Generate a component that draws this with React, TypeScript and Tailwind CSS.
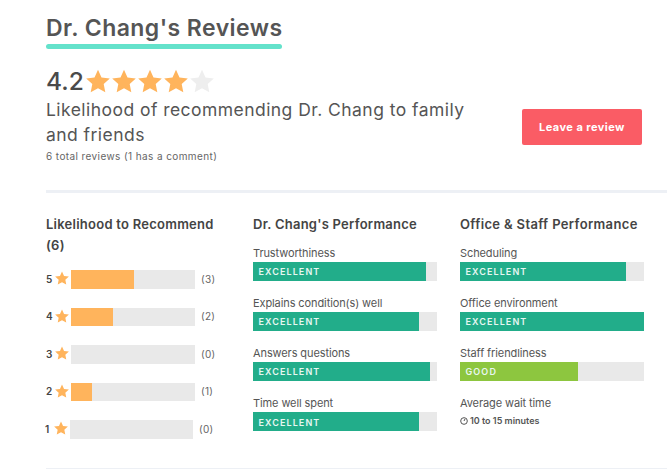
const font = { fontFamily: "Inter, Lato, sans-serif" };

function Star({ className }: { className: string }) {
  return (
    <svg viewBox="0 0 24 24" className={className} fill="currentColor" aria-hidden="true">
      <path d="M12 .8l3.500 7.600 8.300 1-6.100 5.700 1.600 8.200L12 19.200l-7.300 4.100 1.600-8.200L.2 9.400l8.300-1z" />
    </svg>
  );
}

const recommend = [
  { n: 5, pct: 50.5, c: "(3)" },
  { n: 4, pct: 33.5, c: "(2)" },
  { n: 3, pct: 0, c: "(0)" },
  { n: 2, pct: 17, c: "(1)" },
  { n: 1, pct: 0, c: "(0)" },
];

function Meter({ label, pct, grade = "EXCELLENT", good = false }: { label: string; pct: number; grade?: string; good?: boolean }) {
  return (
    <div className="h-[50.3px]">
      <div className="text-[11px] leading-[18px] h-[18px] text-[#555] tracking-[-0.1px] whitespace-nowrap">{label}</div>
      <div className="h-[19px] bg-[#e9e9e9]">
        <div
          className={`h-full flex items-center pl-[5.5px] pt-[1px] text-[9px] font-semibold tracking-[1.1px] text-[#e8f7f2] ${good ? "bg-[#8dc63f]" : "bg-[#22ad8a]"}`}
          style={{ width: `${pct}%` }}
        >
          {grade}
        </div>
      </div>
    </div>
  );
}

export default function App() {
  return (
    <div className="w-[672px] h-[469px] overflow-hidden bg-white pl-[46px] pt-[14px] text-[#4a4a4a]" style={font}>
      <div className="flex justify-start">
        <div className="w-[236px]">
          <h1 className="text-[23px] leading-[28px] font-semibold text-[#555] tracking-[0.45px] whitespace-nowrap">Dr. Chang's Reviews</h1>
          <div className="mt-[2px] h-[4.5px] rounded-full bg-[#64e2cb]" />
        </div>
      </div>

      <div className="mt-[18px] flex items-center h-[28px]">
        <span className="w-[40px] text-[24.5px] leading-[28px] font-medium text-[#4a4a4a]">4.2</span>
        <div className="flex gap-[2px]">
          <Star className="w-[24px] h-[24px] text-[#ffb45c]" />
          <Star className="w-[24px] h-[24px] text-[#ffb45c]" />
          <Star className="w-[24px] h-[24px] text-[#ffb45c]" />
          <Star className="w-[24px] h-[24px] text-[#ffb45c]" />
          <Star className="w-[24px] h-[24px] text-[#eeeeee]" />
        </div>
      </div>

      <div className="flex items-start">
        <div className="w-[476px]">
          <p className="mt-[2px] w-[425px] text-[17.5px] leading-[25px] text-[#555] tracking-[0.45px]">
            Likelihood of recommending Dr. Chang to family and friends
          </p>
          <p className="mt-[1px] text-[10px] leading-[16px] text-[#666] tracking-[0.4px]">6 total reviews (1 has a comment)</p>
        </div>
        <button className="mt-[14px] w-[120px] h-[36px] pt-[1px] rounded-[2px] bg-[#fa5c65] text-white text-[11px] font-bold tracking-[0.45px]">
          Leave a review
        </button>
      </div>

      <div className="mt-[26px] h-[3px] w-[621px] bg-[#edf0f5]" />

      <div className="mt-[21px] flex gap-[23px] h-[254px]">
        <div className="w-[184px]">
          <h2 className="text-[13px] leading-[21px] font-semibold text-[#444] tracking-[0.25px] w-[175px]">Likelihood to Recommend (6)</h2>
          <div className="mt-[5px]">
            {recommend.map((r) => (
              <div key={r.n} className={`flex items-center h-[37.5px] ${r.n === 1 ? "-ml-[1px]" : ""}`}>
                <span className="w-[10px] text-[10px] font-semibold text-[#444]">{r.n}</span>
                <Star className="ml-[-1px] w-[14px] h-[14px] -mt-[2px] text-[#ffb45c]" />
                <div className={`ml-[2px] h-[18.5px] bg-[#e9e9e9] ${r.n === 1 ? "w-[123px]" : "w-[124px]"}`}>
                  <div className="h-full bg-[#ffb45c]" style={{ width: `${r.pct}%` }} />
                </div>
                <span className="ml-[6px] text-[10px] text-[#666] tracking-[0.3px]">{r.c}</span>
              </div>
            ))}
          </div>
        </div>

        <div className="w-[184px]">
          <h2 className="text-[13px] leading-[21px] font-semibold text-[#444] tracking-[0.25px] whitespace-nowrap mb-[9px]">Dr. Chang's Performance</h2>
          <Meter label="Trustworthiness" pct={94} />
          <Meter label="Explains condition(s) well" pct={90} />
          <Meter label="Answers questions" pct={96} />
          <Meter label="Time well spent" pct={90} />
        </div>

        <div className="w-[184px]">
          <h2 className="text-[13px] leading-[21px] font-semibold text-[#444] tracking-[0.35px] whitespace-nowrap mb-[9px]">Office &amp; Staff Performance</h2>
          <Meter label="Scheduling" pct={90} />
          <Meter label="Office environment" pct={100} />
          <Meter label="Staff friendliness" pct={64} grade="GOOD" good />
          <div className="text-[11px] leading-[18px] h-[18px] text-[#555] tracking-[-0.1px]">Average wait time</div>
          <div className="mt-[2px] flex items-center gap-[2px] text-[9px] font-semibold text-[#555]">
            <svg viewBox="0 0 24 24" className="w-[8px] h-[8px]" fill="none" stroke="currentColor" strokeWidth="3" aria-hidden="true">
              <circle cx="12" cy="12" r="10" />
              <path d="M12 12l3-6" />
            </svg>
            10 to 15 minutes
          </div>
        </div>
      </div>

      <div className="h-[3px] w-[621px] bg-[#edf0f5]" />
    </div>
  );
}
